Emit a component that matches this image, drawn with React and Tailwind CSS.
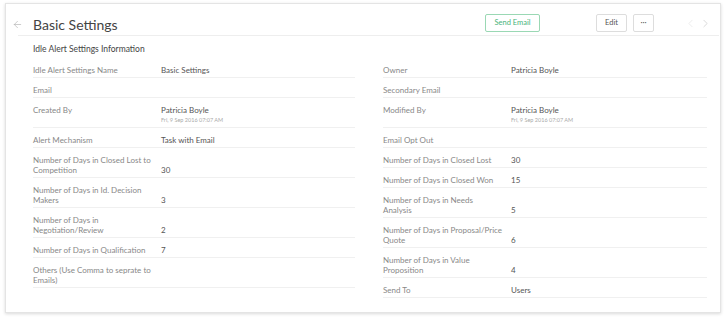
import React from "react";
import { ArrowLeft, ChevronLeft, ChevronRight } from "lucide-react";

const leftRows = [
  { label: "Idle Alert Settings Name", value: "Basic Settings" },
  { label: "Email", value: "" },
  { label: "Created By", value: "Patricia Boyle", date: "Fri, 9 Sep 2016 07:07 AM" },
  { label: "Alert Mechanism", value: "Task with Email" },
  { label: "Number of Days in Closed Lost to Competition", value: "30" },
  { label: "Number of Days in Id. Decision Makers", value: "3" },
  { label: "Number of Days in Negotiation/Review", value: "2" },
  { label: "Number of Days in Qualification", value: "7" },
  { label: "Others (Use Comma to seprate to Emails)", value: "" },
];

const rightRows = [
  { label: "Owner", value: "Patricia Boyle" },
  { label: "Secondary Email", value: "" },
  { label: "Modified By", value: "Patricia Boyle", date: "Fri, 9 Sep 2016 07:07 AM" },
  { label: "Email Opt Out", value: "" },
  { label: "Number of Days in Closed Lost", value: "30" },
  { label: "Number of Days in Closed Won", value: "15" },
  { label: "Number of Days in Needs Analysis", value: "5" },
  { label: "Number of Days in Proposal/Price Quote", value: "6" },
  { label: "Number of Days in Value Proposition", value: "4" },
  { label: "Send To", value: "Users" },
];

const Row = ({ label, value, date }) => (
  <div
    className={`flex border-b border-[#f0f0f0] pt-[7px] pb-[2px] ${
      date ? "items-start" : "items-end"
    }`}
  >
    <div className="w-[128px] shrink-0 pr-[8.5px] text-[8px] leading-[10px] text-[#888]">
      {label}
    </div>
    <div className="flex-1 text-[8px] leading-[10px] text-[#555]">
      <div>{value}</div>
      {date && (
        <div className="text-[5.5px] leading-[10px] text-[#aaa]">{date}</div>
      )}
    </div>
  </div>
);

export default function App() {
  return (
    <div
      className="bg-white w-[725px] h-[317px] pt-[3px] pl-[5px]"
      style={{ fontFamily: "Lato, 'Open Sans', sans-serif" }}
    >
      <div className="w-[716px] h-[310px] border border-[#e4e4e4] bg-white shadow-[0_1px_3px_rgba(0,0,0,0.15)]">
        <div className="flex items-center h-[31px] pt-[7px] pl-[6px] pr-[8px]">
          <ArrowLeft size={11} strokeWidth={1.3} className="mt-[3px] text-[#aaa]" />
          <div className="ml-[10px] mt-[3px] text-[14px] leading-[18px] text-[#444]">Basic Settings</div>
          <div className="ml-auto flex items-center">
            <button className="w-[55px] h-[18px] border border-[#9ad8b4] rounded-[2px] text-[7.5px] text-[#49b47a]">
              Send Email
            </button>
            <button className="ml-[56px] w-[31px] h-[18px] border border-[#ddd] rounded-[2px] text-[7.5px] text-[#555]">
              Edit
            </button>
            <button className="ml-[6px] w-[21px] h-[18px] border border-[#ddd] rounded-[2px] text-[8px] leading-[8px] text-[#555] pb-[3px]">
              ···
            </button>
            <div className="ml-[30px] flex items-center gap-[2px]">
              <ChevronLeft size={13} strokeWidth={1} className="text-[#ddd]" />
              <ChevronRight size={13} strokeWidth={1} className="text-[#bbb]" />
            </div>
          </div>
        </div>
        <div className="ml-[12px] mr-[1px] border-b border-[#eee]" />
        <div className="pl-[27px] pr-[12px]">
          <div className="pt-[7px] pb-[3px] text-[8.5px] leading-[12px] text-[#444]">
            Idle Alert Settings Information
          </div>
          <div className="flex gap-[28px]">
            <div className="w-[322px]">
              {leftRows.map((r) => (
                <Row key={r.label} {...r} />
              ))}
            </div>
            <div className="w-[324px]">
              {rightRows.map((r) => (
                <Row key={r.label} {...r} />
              ))}
            </div>
          </div>
        </div>
      </div>
    </div>
  );
}
